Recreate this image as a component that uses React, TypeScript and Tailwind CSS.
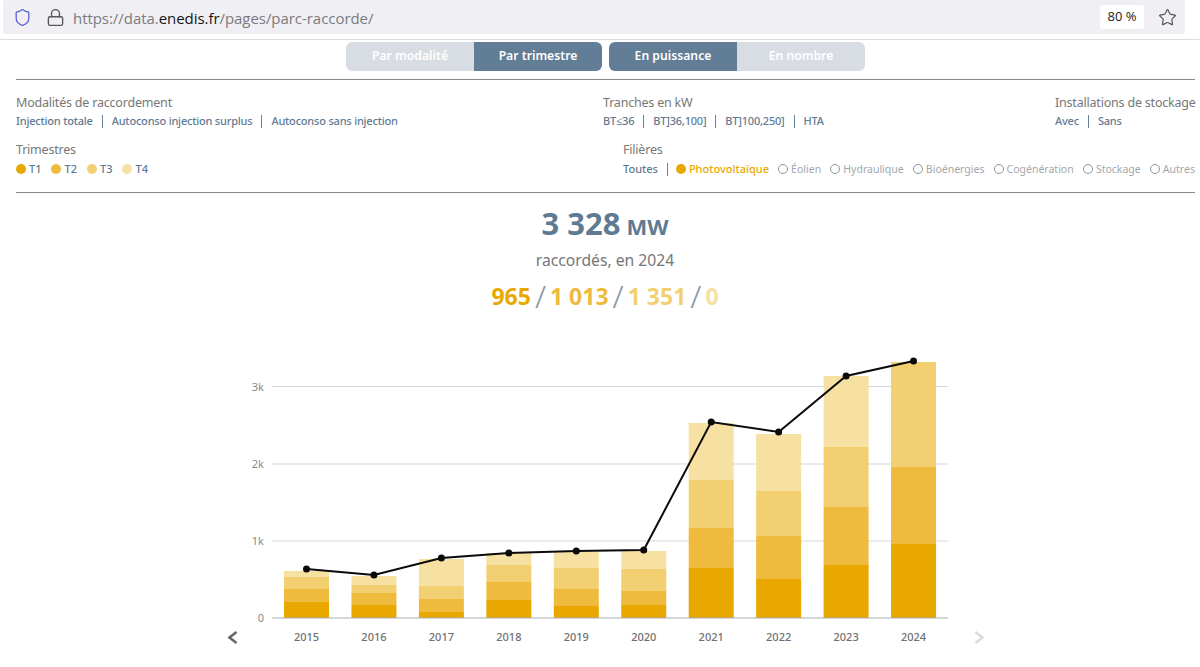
import { Lock, Shield, Star } from "lucide-react";

const FONT = "font-['Noto_Sans','Open_Sans',sans-serif]";
const C1 = "#e9a800";
const C2 = "#eebb3f";
const C3 = "#f2d072";
const C4 = "#f6e1a3";

type Year = { y: string; t: number[]; line: number };
const BASE = 618;
const YEARS: Year[] = [
  { y: "2015", t: [602, 589, 577, 571], line: 569 },
  { y: "2016", t: [605, 593, 585, 576], line: 575 },
  { y: "2017", t: [612, 599, 586, 559], line: 558 },
  { y: "2018", t: [600, 582, 565, 553], line: 553 },
  { y: "2019", t: [606, 589, 568, 552], line: 551 },
  { y: "2020", t: [605, 591, 569, 551], line: 550 },
  { y: "2021", t: [568, 528, 480, 423], line: 422 },
  { y: "2022", t: [579, 536, 491, 434], line: 432 },
  { y: "2023", t: [565, 507, 447, 376], line: 376 },
  { y: "2024", t: [544, 467, 362, 362], line: 361 },
];
const COLORS = [C1, C2, C3, C4];
const cx = (i: number) => 306.5 + i * 67.45;

function Sep() {
  return <span className="inline-block w-px h-[13px] bg-[#6b8299]" />;
}

function LinkRow({ items }: { items: string[] }) {
  return (
    <div className="flex items-center gap-[9px] text-[11px] font-medium text-[#5f7a93] leading-[16px] tracking-[-0.2px] whitespace-nowrap">
      {items.map((t, i) => (
        <span key={t} className="flex items-center gap-[9px]">
          {i > 0 && <Sep />}
          <span>{t}</span>
        </span>
      ))}
    </div>
  );
}

function Label({ children }: { children: string }) {
  return <div className="text-[12.5px] leading-[18px] text-[#777] tracking-[-0.2px]">{children}</div>;
}

function Chart() {
  const grids = [
    { y: 386.5, l: "3k" },
    { y: 464, l: "2k" },
    { y: 541, l: "1k" },
  ];
  const pts = YEARS.map((d, i) => `${cx(i)},${d.line}`).join(" ");
  return (
    <svg width={1200} height={327} viewBox="0 340 1200 327" className="block">
      {grids.map((g) => (
        <g key={g.l}>
          <line x1={272} x2={948} y1={g.y} y2={g.y} stroke="#d4d6da" strokeWidth={1} />
          <text x={264} y={g.y + 4} textAnchor="end" fontSize={11} fill="#8a8a8a" fontFamily="Noto Sans">{g.l}</text>
        </g>
      ))}
      <text x={264} y={622} textAnchor="end" fontSize={11} fill="#8a8a8a" fontFamily="Noto Sans">0</text>
      {YEARS.map((d, i) => (
        <g key={d.y}>
          {d.t.map((top, k) => {
            const bottom = k === 0 ? BASE : d.t[k - 1];
            return bottom > top ? (
              <rect key={k} x={cx(i) - 22.5} y={top} width={45} height={bottom - top} fill={COLORS[k]} />
            ) : null;
          })}
          <text x={cx(i)} y={641} textAnchor="middle" fontSize={11} fontWeight={500} fill="#6f6f6f" fontFamily="Noto Sans">{d.y}</text>
        </g>
      ))}
      <line x1={272} x2={948} y1={618} y2={618} stroke="#a9adb3" strokeWidth={1} />
      <polyline points={pts} fill="none" stroke="#0a0a0a" strokeWidth={2} />
      {YEARS.map((d, i) => (
        <circle key={d.y} cx={cx(i)} cy={d.line} r={3.5} fill="#0a0a0a" />
      ))}
      <path d="M236.5 632 L229.5 637.5 L236.5 643" fill="none" stroke="#666" strokeWidth={2.6} />
      <path d="M975.5 632 L982.5 637.5 L975.5 643" fill="none" stroke="#dcdcdc" strokeWidth={2.6} />
    </svg>
  );
}

export default function App() {
  const filieres = ["Éolien", "Hydraulique", "Bioénergies", "Cogénération", "Stockage", "Autres"];
  return (
    <div className={`w-[1200px] h-[667px] overflow-hidden bg-white ${FONT}`}>
      {/* Browser bar */}
      <div className="h-[40px] border-b border-[#dcdde0] pl-[3px]">
        <div className="h-[34px] w-[1182px] bg-[#f0f0f4] rounded-[3px] flex items-center pl-[10px] pr-[8px]">
          <Shield size={19} strokeWidth={1.6} className="text-[#5a5fd8]" />
          <Lock size={19} strokeWidth={1.7} className="text-[#55555c] ml-[14px]" />
          <div className="ml-[8px] mt-[2px] text-[15px] tracking-[-0.05px] text-[#7a7a80] font-['Open_Sans',sans-serif]">
            https://data.<span className="text-[#15141a]">enedis.fr</span>/pages/parc-raccorde/
          </div>
          <div className="ml-auto bg-white rounded-[3px] w-[44px] h-[24px] flex items-center justify-center text-[13px] text-[#222] font-['Open_Sans',sans-serif]">
            80 %
          </div>
          <Star size={19} strokeWidth={1.5} className="text-[#55555c] ml-[14px]" />
        </div>
      </div>

      {/* Toggles */}
      <div className="flex justify-center gap-[7px] pt-[2px] pl-[11px]">
        <div className="flex h-[29px] w-[256px] rounded-[6px] overflow-hidden text-[12.2px] font-semibold">
          <div className="w-[128px] bg-[#d8dde3] text-white flex items-center justify-center">Par modalité</div>
          <div className="w-[128px] bg-[#627d96] text-white flex items-center justify-center">Par trimestre</div>
        </div>
        <div className="flex h-[29px] w-[256px] rounded-[6px] overflow-hidden text-[12.2px] font-semibold">
          <div className="w-[128px] bg-[#627d96] text-white flex items-center justify-center">En puissance</div>
          <div className="w-[128px] bg-[#d8dde3] text-white flex items-center justify-center">En nombre</div>
        </div>
      </div>

      {/* Filters */}
      <div className="mx-[16px] w-[1179px] mt-[8px] border-t border-b border-[#8a8a8a] h-[114px] pt-[14px]">
        <div className="flex">
          <div className="w-[587px] shrink-0">
            <Label>Modalités de raccordement</Label>
            <div className="mt-[1px]">
              <LinkRow items={["Injection totale", "Autoconso injection surplus", "Autoconso sans injection"]} />
            </div>
          </div>
          <div className="w-[452px] shrink-0">
            <Label>Tranches en kW</Label>
            <div className="mt-[1px]">
              <LinkRow items={["BT≤36", "BT]36,100]", "BT]100,250]", "HTA"]} />
            </div>
          </div>
          <div className="flex-1 whitespace-nowrap">
            <Label>Installations de stockage</Label>
            <div className="mt-[1px]">
              <LinkRow items={["Avec", "Sans"]} />
            </div>
          </div>
        </div>
        <div className="flex justify-between mt-[12px]">
          <div>
            <Label>Trimestres</Label>
            <div className="mt-[2px] flex items-center gap-[10px] text-[11px] font-medium text-[#5f7a93] leading-[16px]">
              {["T1", "T2", "T3", "T4"].map((t, i) => (
                <span key={t} className="flex items-center gap-[3px]">
                  <span
                    className={`w-[10px] h-[10px] rounded-full ${
                      ["bg-[#e9a800]", "bg-[#eebb3f]", "bg-[#f2d072]", "bg-[#f6e1a3]"][i]
                    }`}
                  />
                  {t}
                </span>
              ))}
            </div>
          </div>
          <div className="w-[572px]">
            <Label>Filières</Label>
            <div className="mt-[2px] flex items-center justify-between text-[10.5px] leading-[16px] whitespace-nowrap">
              <span className="flex items-center gap-[9px]">
                <span className="font-medium text-[#5f7a93] text-[11px]">Toutes</span>
                <Sep />
                <span className="flex items-center gap-[3px] font-medium text-[#e9a800] text-[11px] -ml-[1px]">
                  <span className="w-[10px] h-[10px] rounded-full bg-[#e9a800]" />
                  Photovoltaïque
                </span>
              </span>
              {filieres.map((f) => (
                <span key={f} className="flex items-center gap-[3px] text-[#a3a7ac]">
                  <span className="w-[10px] h-[10px] rounded-full border border-[#8f949a]" />
                  {f}
                </span>
              ))}
            </div>
          </div>
        </div>
      </div>

      {/* Totals */}
      <div className="flex flex-col items-center pl-[10px]">
        <div className="mt-[8px] h-[44px] flex items-baseline gap-[6px] text-[#5f7a93] font-bold leading-[44px]">
          <span className="text-[31px]">3 328</span>
          <span className="text-[22px]">MW</span>
        </div>
        <div className="mt-[5px] text-[15.7px] leading-[20px] text-[#777]">raccordés, en 2024</div>
        <div className="mt-[10px] flex items-center gap-[4px] text-[23px] leading-[32px] font-bold">
          <span className="text-[#e9a800]">965</span>
          <span className="font-light text-[32px] text-[#8a97a3]">/</span>
          <span className="text-[#eebb3f]">1 013</span>
          <span className="font-light text-[32px] text-[#8a97a3]">/</span>
          <span className="text-[#f2d072]">1 351</span>
          <span className="font-light text-[32px] text-[#8a97a3]">/</span>
          <span className="text-[#f6e1a3]">0</span>
        </div>
      </div>

      <div className="mt-[28px]">
        <Chart />
      </div>
    </div>
  );
}
